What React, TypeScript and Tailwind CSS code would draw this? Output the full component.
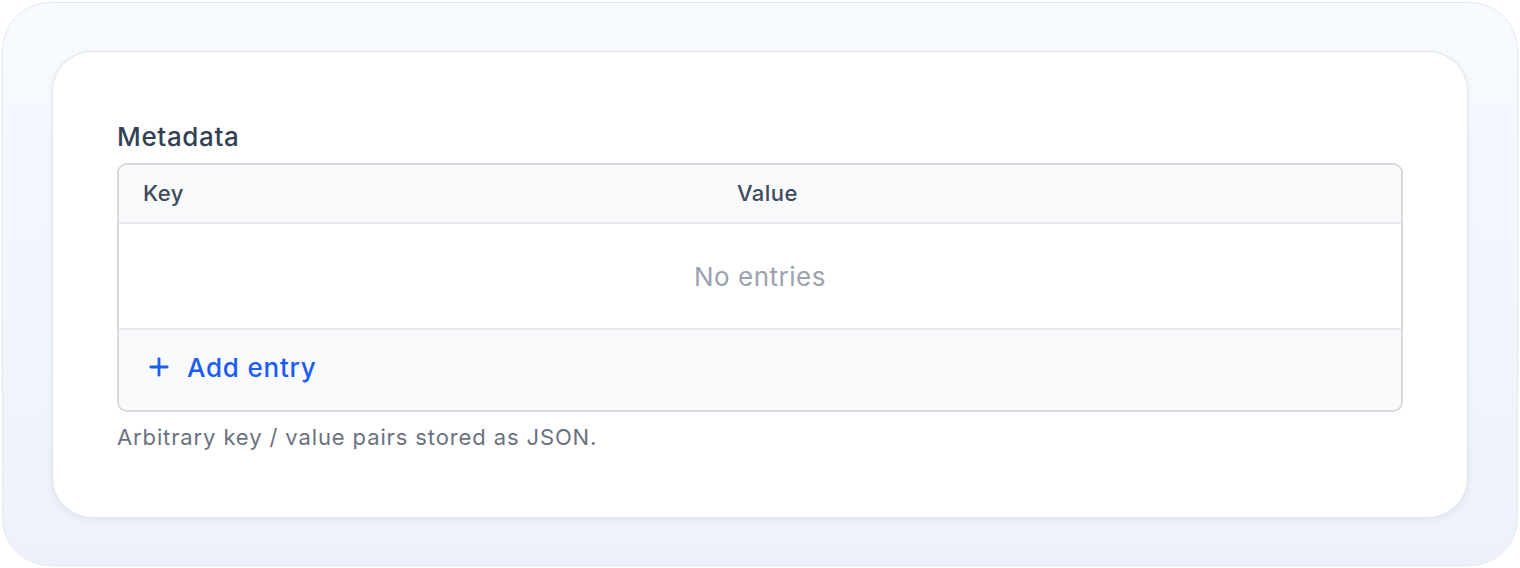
import { Plus } from "lucide-react";

export default function App() {
	return (
		<div
			className="h-[568px] w-full bg-white p-[2px]"
			style={{ fontFamily: "Inter, 'Noto Sans', sans-serif" }}
		>
			<div className="h-full rounded-[48px] border border-[#e3e8f0] bg-gradient-to-b from-[#f7faff] to-[#edf2fa] px-[49px] pt-[48px]">
				<div className="rounded-[40px] border border-[#dfe4ec] bg-white px-[64px] pt-[67px] pb-[64px] shadow-[0_2px_6px_rgba(15,23,42,0.06)]">
					<h2 className="text-[26px] leading-[36px] font-medium tracking-[0.025em] text-[#334155]">
						Metadata
					</h2>
					<div className="mt-[8px] overflow-hidden rounded-[10px] border-2 border-[#d5d9e0]">
						<div className="grid h-[59px] grid-cols-[594px_1fr] items-center border-b-2 border-[#e5e7eb] bg-[#f8fafc] text-[22px] font-medium tracking-[0.02em] text-[#3f4a5c]">
							<div className="pl-[24px]">Key</div>
							<div className="pl-[24px]">Value</div>
						</div>
						<div className="flex h-[104px] items-center justify-center text-[26px] tracking-[0.02em] text-[#9ca3af]">
							No entries
						</div>
						<div className="flex h-[82px] items-center border-t-2 border-[#e5e7eb] bg-[#f8fafc] pb-[6px] pl-[26px]">
							<button
								type="button"
								className="flex items-center gap-[14px] text-[26px] font-medium tracking-[0.03em] text-[#1a5cf5]"
							>
								<Plus className="h-[28px] w-[28px]" strokeWidth={2.4} />
								Add entry
							</button>
						</div>
					</div>
					<p className="mt-[9px] text-[22px] leading-[32px] tracking-[0.04em] text-[#6b7280]">
						Arbitrary key / value pairs stored as JSON.
					</p>
				</div>
			</div>
		</div>
	);
}
